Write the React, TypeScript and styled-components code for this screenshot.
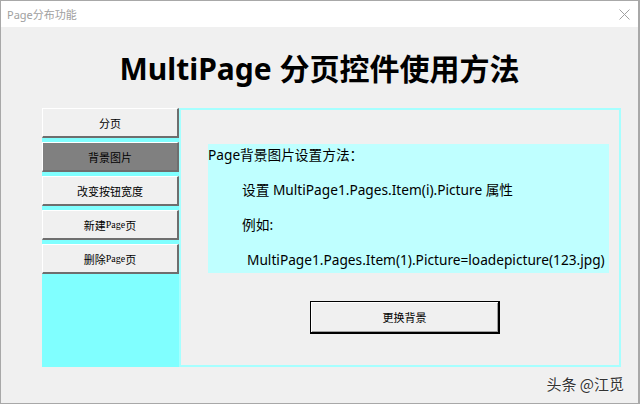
import React from "react";
import styled, { createGlobalStyle } from "styled-components";

const Global = createGlobalStyle`
  html, body { margin: 0; padding: 0; background: #f0f0f0; }
  body { width: 640px; height: 404px; overflow: hidden; font-family: "Noto Sans", "Noto Sans CJK SC", sans-serif; }
`;

const Window = styled.div`
  width: 640px;
  height: 404px;
  box-sizing: border-box;
  border: 1px solid #a8a8a8;
  border-right-width: 2px;
  display: flex;
  flex-direction: column;
  background: #f0f0f0;
`;

const TitleBar = styled.div`
  height: 26px;
  flex: none;
  background: #ffffff;
  display: flex;
  align-items: center;
  justify-content: space-between;
  padding: 0 8px 0 6px;
`;

const TitleText = styled.span`
  font-family: "Noto Sans", "Noto Sans CJK SC", sans-serif;
  font-size: 11px;
  color: #a0a0a0;
`;

const Body = styled.div`
  flex: 1;
  display: flex;
  flex-direction: column;
  position: relative;
`;

const Heading = styled.h1`
  margin: 0;
  height: 81px;
  display: flex;
  align-items: center;
  justify-content: center;
  font-family: "Noto Sans", "Noto Sans CJK SC", sans-serif;
  font-weight: 700;
  font-size: 30px;
  color: #000;
  padding-bottom: 2px;
  box-sizing: border-box;
`;

const Row = styled.div`
  display: flex;
  margin-left: 41px;
  height: 259px;
`;

const Side = styled.div`
  width: 137px;
  background: #80ffff;
  display: flex;
  flex-direction: column;
  gap: 4px;
`;

const TabButton = styled.div<{ $active?: boolean }>`
  height: 30px;
  box-sizing: border-box;
  background: ${(p) => (p.$active ? "#808080" : "#f0f0f0")};
  border-top: 1px solid #ffffff;
  border-left: 1px solid #ffffff;
  border-bottom: 2px solid #6e6e6e;
  border-right: 2px solid #6e6e6e;
  display: flex;
  align-items: center;
  justify-content: center;
  font-family: "Noto Sans CJK SC", sans-serif;
  font-size: 11px;
  color: #000;
`;

const Serif = styled.span`
  font-family: "Liberation Serif", serif;
  font-size: 10px;
`;

const Panel = styled.div`
  width: 442px;
  box-sizing: border-box;
  border: 2px solid #a6ffff;
  background: #f0f0f0;
  display: flex;
  flex-direction: column;
  padding: 34px 0 0 27px;
`;

const InfoBox = styled.div`
  width: 401px;
  height: 129px;
  background: #bfffff;
  display: flex;
  flex-direction: column;
  gap: 13px;
  font-family: "Noto Sans", "Noto Sans CJK SC", sans-serif;
  font-size: 13.7px;
  color: #000;
`;

const Line = styled.div<{ $indent: number }>`
  height: 22px;
  line-height: 22px;
  padding-left: ${(p) => p.$indent}px;
  white-space: nowrap;
`;

const ActionButton = styled.div`
  margin: 28px 0 0 102px;
  width: 190px;
  height: 33px;
  box-sizing: border-box;
  background: #f0f0f0;
  border: 1px solid #000;
  border-right-width: 2px;
  border-bottom-width: 2px;
  box-shadow: inset 1px 1px 0 #ffffff, inset -1px -1px 0 #a0a0a0;
  display: flex;
  align-items: center;
  justify-content: center;
  font-family: "Noto Sans CJK SC", sans-serif;
  font-size: 11px;
  color: #000;
`;

const Watermark = styled.div`
  position: absolute;
  right: 14px;
  bottom: 9px;
  font-family: "Noto Sans CJK SC", sans-serif;
  font-size: 15px;
  color: #333;
  text-shadow: 0 0 2px #fff, 0 0 1px #fff;
`;

const CloseIcon = () => (
  <svg width="11" height="11" viewBox="0 0 11 11">
    <path d="M0.5 0.5 L10.5 10.5 M10.5 0.5 L0.5 10.5" stroke="#a0a0a0" strokeWidth="1" />
  </svg>
);

export default function App() {
  return (
    <>
      <Global />
      <Window>
        <TitleBar>
          <TitleText>Page分布功能</TitleText>
          <CloseIcon />
        </TitleBar>
        <Body>
          <Heading>MultiPage 分页控件使用方法</Heading>
          <Row>
            <Side>
              <TabButton>分页</TabButton>
              <TabButton $active>背景图片</TabButton>
              <TabButton>改变按钮宽度</TabButton>
              <TabButton>
                新建<Serif>Page</Serif>页
              </TabButton>
              <TabButton>
                删除<Serif>Page</Serif>页
              </TabButton>
            </Side>
            <Panel>
              <InfoBox>
                <Line $indent={0}>Page背景图片设置方法：</Line>
                <Line $indent={34}>设置 MultiPage1.Pages.Item(i).Picture 属性</Line>
                <Line $indent={34}>例如:</Line>
                <Line $indent={39}>MultiPage1.Pages.Item(1).Picture=loadepicture(123.jpg)</Line>
              </InfoBox>
              <ActionButton>更换背景</ActionButton>
            </Panel>
          </Row>
          <Watermark>头条 @江觅</Watermark>
        </Body>
      </Window>
    </>
  );
}
